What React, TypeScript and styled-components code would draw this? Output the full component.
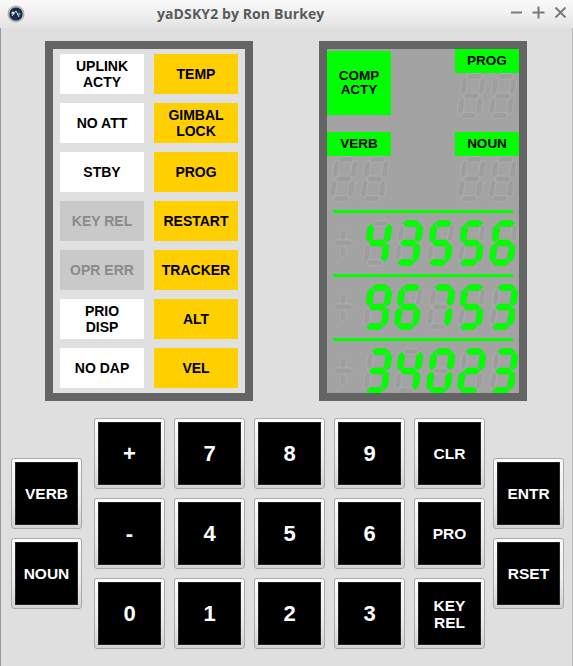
import React from "react";
import styled, { createGlobalStyle } from "styled-components";

const GlobalStyle = createGlobalStyle`
  html, body {
    margin: 0;
    padding: 0;
    background: #dfdfdf;
  }
  * {
    box-sizing: border-box;
  }
`;

const Window = styled.div`
  width: 573px;
  height: 666px;
  display: flex;
  flex-direction: column;
  background: #dfdfdf;
  overflow: hidden;
  font-family: "Liberation Sans", Arial, sans-serif;
`;

const TitleBar = styled.div`
  height: 28px;
  flex: none;
  display: flex;
  align-items: center;
  padding: 0 6px 0 7px;
  background: linear-gradient(to bottom, #f9f9f9 0%, #f0f0f0 50%, #e3e3e3 100%);
`;

const TitleText = styled.div`
  flex: 1;
  padding-left: 132px;
  font-family: "Open Sans", "DejaVu Sans", sans-serif;
  font-weight: 700;
  font-size: 14px;
  color: #5a5a5a;
  letter-spacing: 0.1px;
  margin-top: -2px;
`;

const Controls = styled.div`
  display: flex;
  gap: 9px;
  align-items: center;
  margin-top: -3px;
`;

const Body = styled.div`
  flex: 1;
  border-left: 1px solid #9a9a9a;
  border-right: 1px solid #b8b8b8;
  display: flex;
  flex-direction: column;
`;

const Panels = styled.div`
  display: flex;
  gap: 66px;
  padding-left: 44px;
  margin-top: 13px;
`;

const Frame = styled.div`
  width: 208px;
  height: 360px;
  border: 8px solid #646464;
`;

const IndicatorGrid = styled.div`
  height: 100%;
  background: #e0e0e0;
  padding: 5px 7px;
  display: grid;
  grid-template-columns: 84px 84px;
  grid-auto-rows: 40px;
  column-gap: 10px;
  row-gap: 9px;
`;

const lampColors = {
  white: { bg: "#ffffff", fg: "#000000" },
  yellow: { bg: "#ffcf00", fg: "#000000" },
  off: { bg: "#c9c9c9", fg: "#8a8a8a" },
};

const Lamp = styled.div<{ $kind: keyof typeof lampColors }>`
  background: ${(p) => lampColors[p.$kind].bg};
  color: ${(p) => lampColors[p.$kind].fg};
  display: flex;
  align-items: center;
  justify-content: center;
  text-align: center;
  font-weight: 700;
  font-size: 14px;
  line-height: 16px;
`;

const Display = styled.div`
  height: 100%;
  background: #a3a3a3;
  overflow: hidden;
  display: flex;
  flex-direction: column;
`;

const TopSection = styled.div`
  display: grid;
  grid-template-columns: 64px 64px 64px;
  grid-template-rows: 83px 78px;
`;

const Block = styled.div<{ $col: number }>`
  grid-column: ${(p) => p.$col};
  display: flex;
  flex-direction: column;
`;

const GreenLabel = styled.div<{ $h?: number; $mt?: number }>`
  background: #00ff00;
  color: #000;
  height: ${(p) => p.$h ?? 24}px;
  margin-top: ${(p) => p.$mt ?? 0}px;
  display: flex;
  align-items: center;
  justify-content: center;
  text-align: center;
  font-weight: 700;
  font-size: 13.5px;
  line-height: 14px;
`;

const DigitPair = styled.div`
  display: flex;
  height: 46px;
  padding-left: 1px;
`;

const Register = styled.div`
  display: flex;
  flex-direction: column;
  flex: none;
`;

const Rule = styled.div`
  height: 3px;
  margin: 0 6px;
  background: #00ff00;
`;

const RegisterDigits = styled.div`
  display: flex;
  align-items: flex-start;
  height: 46px;
  margin: 7px 0 8px;
  padding-left: 4px;
`;

const SignSlot = styled.div`
  width: 31px;
`;

const Keypad = styled.div`
  display: flex;
  align-items: flex-start;
  padding-left: 10px;
  margin-top: 17px;
`;

const SideColumn = styled.div<{ $ml: number }>`
  display: flex;
  flex-direction: column;
  gap: 9px;
  margin-top: 40px;
  margin-left: ${(p) => p.$ml}px;
`;

const KeyGrid = styled.div`
  display: grid;
  grid-template-columns: repeat(5, 71px);
  grid-auto-rows: 71px;
  gap: 9px;
  margin-left: 12px;
`;

const Key = styled.div`
  width: 71px;
  height: 71px;
  padding: 3px;
  border: 1px solid #a9a9a9;
  border-radius: 3px;
  background: linear-gradient(to bottom, #fdfdfd 0%, #ececec 60%, #d2d2d2 100%);
`;

const KeyFace = styled.div<{ $big?: boolean }>`
  width: 100%;
  height: 100%;
  background: #000;
  color: #fff;
  display: flex;
  align-items: center;
  justify-content: center;
  text-align: center;
  font-weight: 700;
  font-size: ${(p) => (p.$big ? 22 : 15.5)}px;
  line-height: 17px;
  box-shadow: inset 0 0 0 1px #222;
`;

// seven segment drawing
const T = 5.9;
const H2 = T / 2;
const W = 24;
const HT = 45;
const SKEW = Math.tan((8 * Math.PI) / 180) * HT;

const hSeg = (x0: number, x1: number, yc: number) =>
  `${x0},${yc} ${x0 + H2},${yc - H2} ${x1 - H2},${yc - H2} ${x1},${yc} ${x1 - H2},${yc + H2} ${x0 + H2},${yc + H2}`;
const vSeg = (xc: number, y0: number, y1: number) =>
  `${xc},${y0} ${xc + H2},${y0 + H2} ${xc + H2},${y1 - H2} ${xc},${y1} ${xc - H2},${y1 - H2} ${xc - H2},${y0 + H2}`;

const G = 0.9;
const SEGMENTS: Record<string, string> = {
  a: hSeg(H2 + G, W - H2 - G, H2),
  g: hSeg(H2 + G, W - H2 - G, HT / 2),
  d: hSeg(H2 + G, W - H2 - G, HT - H2),
  f: vSeg(H2, H2 + G, HT / 2 - G),
  e: vSeg(H2, HT / 2 + G, HT - H2 - G),
  b: vSeg(W - H2, H2 + G, HT / 2 - G),
  c: vSeg(W - H2, HT / 2 + G, HT - H2 - G),
};

const DIGIT_MAP: Record<string, string> = {
  "0": "abcdef",
  "1": "bc",
  "2": "abged",
  "3": "abgcd",
  "4": "fgbc",
  "5": "afgcd",
  "6": "afgedc",
  "7": "abc",
  "8": "abcdefg",
  "9": "abcdfg",
};

function SevenSeg({ value }: { value?: string }) {
  const lit = value ? DIGIT_MAP[value] : "";
  return (
    <svg width={31.4} height={46} viewBox="0 0 31.4 46" style={{ flex: "none", overflow: "visible" }}>
      <g transform={`translate(${SKEW + 0.5},0.5) skewX(-8)`}>
        {Object.entries(SEGMENTS).map(([k, pts]) => (
          <polygon
            key={k}
            points={pts}
            fill={lit.includes(k) ? "#00ff00" : "#9e9e9e"}
            stroke={lit.includes(k) ? "#10f010" : "#b2b2b2"}
            strokeWidth={0.7}
          />
        ))}
      </g>
    </svg>
  );
}

function GhostSign() {
  return (
    <svg width={24} height={46} viewBox="0 0 24 46">
      <g fill="#9e9e9e" stroke="#b2b2b2" strokeWidth={0.7}>
        <polygon points={vSeg(12, 9, 21)} />
        <polygon points={vSeg(12, 25, 37)} />
        <polygon points={hSeg(2, 22, 23)} />
      </g>
    </svg>
  );
}

function TitleIcon() {
  return (
    <svg width={18} height={18} viewBox="0 0 18 18">
      <circle cx={9} cy={9} r={8.5} fill="#b7b3a8" />
      <circle cx={9} cy={9} r={6.6} fill="#1d2a55" />
      <circle cx={6} cy={8} r={1.6} fill="#e8e2a0" />
      <circle cx={12} cy={9} r={1.6} fill="#48a86a" />
      <path d="M5 11 L9 6 L12 12" stroke="#d9d9e6" strokeWidth={1} fill="none" />
    </svg>
  );
}

function WinControls() {
  return (
    <Controls>
      <svg width={13} height={13} viewBox="0 0 13 13">
        <line x1={1} y1={6.5} x2={12} y2={6.5} stroke="#7a7a7a" strokeWidth={2} />
      </svg>
      <svg width={13} height={13} viewBox="0 0 13 13">
        <line x1={0.5} y1={6.5} x2={12.5} y2={6.5} stroke="#7a7a7a" strokeWidth={2} />
        <line x1={6.5} y1={0.5} x2={6.5} y2={12.5} stroke="#7a7a7a" strokeWidth={2} />
      </svg>
      <svg width={13} height={13} viewBox="0 0 13 13">
        <line x1={1.5} y1={1.5} x2={11.5} y2={11.5} stroke="#7a7a7a" strokeWidth={2} />
        <line x1={11.5} y1={1.5} x2={1.5} y2={11.5} stroke="#7a7a7a" strokeWidth={2} />
      </svg>
    </Controls>
  );
}

const lamps: { text: string[]; kind: keyof typeof lampColors }[] = [
  { text: ["UPLINK", "ACTY"], kind: "white" },
  { text: ["TEMP"], kind: "yellow" },
  { text: ["NO ATT"], kind: "white" },
  { text: ["GIMBAL", "LOCK"], kind: "yellow" },
  { text: ["STBY"], kind: "white" },
  { text: ["PROG"], kind: "yellow" },
  { text: ["KEY REL"], kind: "off" },
  { text: ["RESTART"], kind: "yellow" },
  { text: ["OPR ERR"], kind: "off" },
  { text: ["TRACKER"], kind: "yellow" },
  { text: ["PRIO", "DISP"], kind: "white" },
  { text: ["ALT"], kind: "yellow" },
  { text: ["NO DAP"], kind: "white" },
  { text: ["VEL"], kind: "yellow" },
];

const registers = ["43556", "96753", "34023"];

const gridKeys = ["+", "7", "8", "9", "CLR", "-", "4", "5", "6", "PRO", "0", "1", "2", "3", "KEY\nREL"];

function Lines({ text }: { text: string[] }) {
  return (
    <div>
      {text.map((t) => (
        <div key={t}>{t}</div>
      ))}
    </div>
  );
}

function KeyButton({ label }: { label: string }) {
  const big = label.length === 1;
  return (
    <Key>
      <KeyFace $big={big}>
        <Lines text={label.split("\n")} />
      </KeyFace>
    </Key>
  );
}

export default function App() {
  return (
    <>
      <GlobalStyle />
      <Window>
        <TitleBar>
          <TitleIcon />
          <TitleText>yaDSKY2 by Ron Burkey</TitleText>
          <WinControls />
        </TitleBar>
        <Body>
          <Panels>
            <Frame>
              <IndicatorGrid>
                {lamps.map((l) => (
                  <Lamp key={l.text.join()} $kind={l.kind}>
                    <Lines text={l.text} />
                  </Lamp>
                ))}
              </IndicatorGrid>
            </Frame>
            <Frame>
              <Display>
                <TopSection>
                  <Block $col={1}>
                    <GreenLabel $h={64} $mt={2}>
                      <Lines text={["COMP", "ACTY"]} />
                    </GreenLabel>
                  </Block>
                  <Block $col={3}>
                    <GreenLabel>PROG</GreenLabel>
                    <DigitPair>
                      <SevenSeg />
                      <SevenSeg />
                    </DigitPair>
                  </Block>
                  <Block $col={1}>
                    <GreenLabel>VERB</GreenLabel>
                    <DigitPair>
                      <SevenSeg />
                      <SevenSeg />
                    </DigitPair>
                  </Block>
                  <Block $col={3}>
                    <GreenLabel>NOUN</GreenLabel>
                    <DigitPair>
                      <SevenSeg />
                      <SevenSeg />
                    </DigitPair>
                  </Block>
                </TopSection>
                {registers.map((r) => (
                  <Register key={r}>
                    <Rule />
                    <RegisterDigits>
                      <SignSlot>
                        <GhostSign />
                      </SignSlot>
                      {r.split("").map((d, i) => (
                        <SevenSeg key={i} value={d} />
                      ))}
                    </RegisterDigits>
                  </Register>
                ))}
              </Display>
            </Frame>
          </Panels>
          <Keypad>
            <SideColumn $ml={0}>
              <KeyButton label="VERB" />
              <KeyButton label="NOUN" />
            </SideColumn>
            <KeyGrid>
              {gridKeys.map((k) => (
                <KeyButton key={k} label={k} />
              ))}
            </KeyGrid>
            <SideColumn $ml={8}>
              <KeyButton label="ENTR" />
              <KeyButton label="RSET" />
            </SideColumn>
          </Keypad>
        </Body>
      </Window>
    </>
  );
}
